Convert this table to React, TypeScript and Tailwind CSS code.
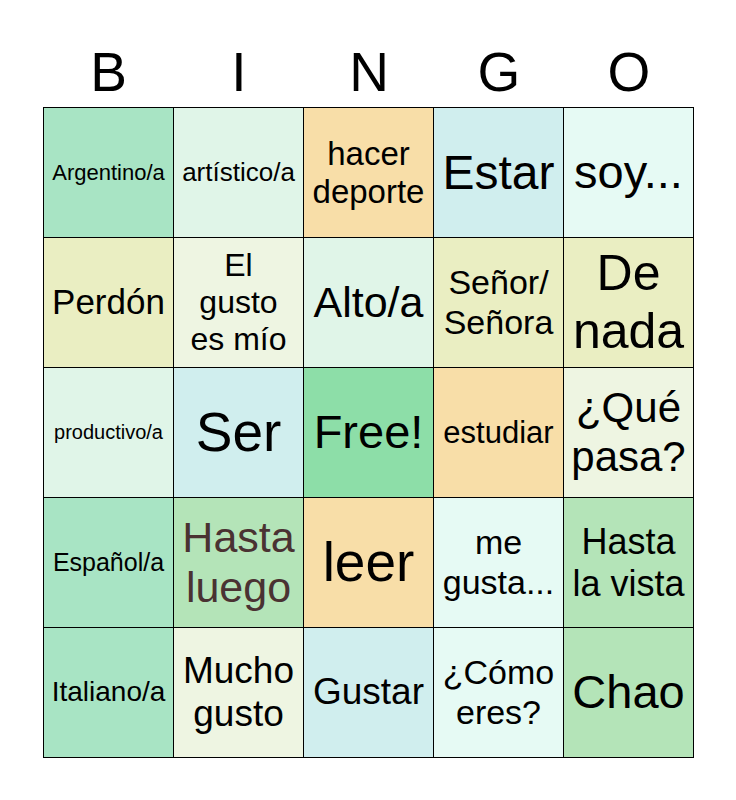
type Cell = { text: string; bg: string; size: string; color?: string };

const cells: Cell[] = [
  { text: 'Argentino/a', bg: 'bg-[#a8e4c4]', size: 'text-[22px]' },
  { text: 'artístico/a', bg: 'bg-[#e0f5e8]', size: 'text-[26px]' },
  { text: 'hacer deporte', bg: 'bg-[#f8dea8]', size: 'text-[33px]' },
  { text: 'Estar', bg: 'bg-[#d0eeee]', size: 'text-[48px]' },
  { text: 'soy...', bg: 'bg-[#e6faf4]', size: 'text-[47px]' },

  { text: 'Perdón', bg: 'bg-[#eaeec2]', size: 'text-[35px]' },
  { text: 'El gusto es mío', bg: 'bg-[#eef5e2]', size: 'text-[32px]' },
  { text: 'Alto/a', bg: 'bg-[#e0f5e8]', size: 'text-[43px]' },
  { text: 'Señor/ Señora', bg: 'bg-[#eaeec2]', size: 'text-[34px]' },
  { text: 'De nada', bg: 'bg-[#eaeec2]', size: 'text-[50px]' },

  { text: 'productivo/a', bg: 'bg-[#e0f5e8]', size: 'text-[20px]' },
  { text: 'Ser', bg: 'bg-[#d0eeee]', size: 'text-[55px]' },
  { text: 'Free!', bg: 'bg-[#8ddea8]', size: 'text-[47px]' },
  { text: 'estudiar', bg: 'bg-[#f8dea8]', size: 'text-[31px]' },
  { text: '¿Qué pasa?', bg: 'bg-[#eef5e2]', size: 'text-[42px]' },

  { text: 'Español/a', bg: 'bg-[#a8e4c4]', size: 'text-[25px]' },
  { text: 'Hasta luego', bg: 'bg-[#b4e4b8]', size: 'text-[43px]', color: 'text-[#4a3232]' },
  { text: 'leer', bg: 'bg-[#f8dea8]', size: 'text-[55px]' },
  { text: 'me gusta...', bg: 'bg-[#e6faf4]', size: 'text-[34px]' },
  { text: 'Hasta la vista', bg: 'bg-[#b4e4b8]', size: 'text-[36px]' },

  { text: 'Italiano/a', bg: 'bg-[#a8e4c4]', size: 'text-[28px]' },
  { text: 'Mucho gusto', bg: 'bg-[#eef5e2]', size: 'text-[37px]' },
  { text: 'Gustar', bg: 'bg-[#d0eeee]', size: 'text-[37px]' },
  { text: '¿Cómo eres?', bg: 'bg-[#e6faf4]', size: 'text-[34px]' },
  { text: 'Chao', bg: 'bg-[#b4e4b8]', size: 'text-[47px]' },
];

export default function App() {
  return (
    <div className="min-h-[800px] w-[736px] bg-white pl-[43px] font-['Liberation_Sans',Arial,sans-serif] text-black">
      {/* Header letters */}
      <div className="grid h-[107px] w-[651px] grid-cols-[131px_130px_130px_130px_130px] pt-[31px] text-[55px] leading-normal">
        {['B', 'I', 'N', 'G', 'O'].map((l) => (
          <div key={l} className="text-center">
            {l}
          </div>
        ))}
      </div>

      {/* Card */}
      <div className="grid w-[651px] grid-cols-[131px_130px_130px_130px_130px] border-t border-black">
        {cells.map((c, i) => (
          <div
            key={i}
            className={`flex h-[130px] items-center justify-center border-r border-b border-black px-[8px] text-center leading-[1.15] ${
              i % 5 === 0 ? 'border-l' : ''
            } ${c.bg} ${c.size} ${c.color ?? ''}`}
          >
            {c.text}
          </div>
        ))}
      </div>
    </div>
  );
}
